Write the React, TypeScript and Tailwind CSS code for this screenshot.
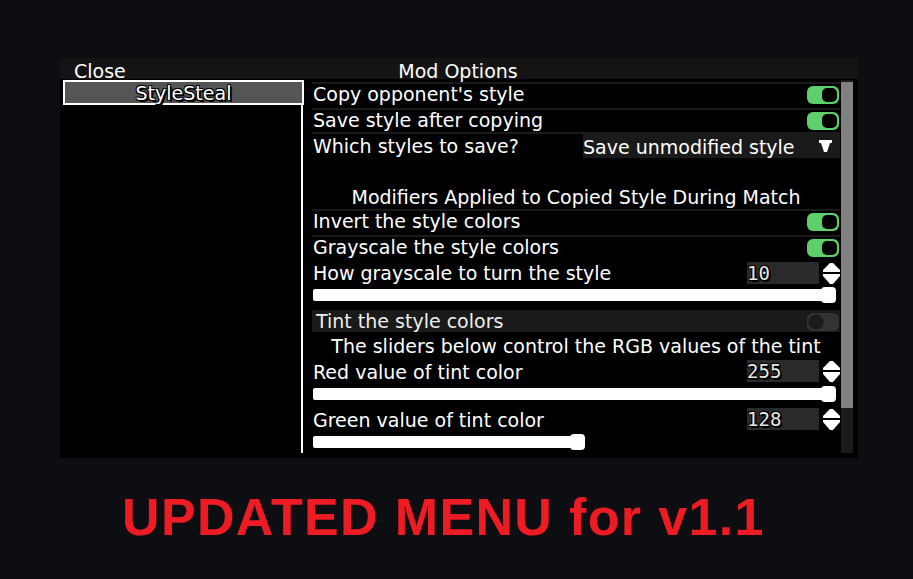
import React from "react";

const shadowAll =
  "[text-shadow:1px_1px_0_#000,-1px_-1px_0_#000,1px_-1px_0_#000,-1px_1px_0_#000,2px_2px_0_#000]";

function Toggle({ on }: { on: boolean }) {
  if (on) {
    return (
      <div className="w-[32px] h-[18px] rounded-[6px] bg-[#5fcf6b] flex justify-end items-center p-[2px] shrink-0">
        <div className="w-[15px] h-[14px] rounded-[5px] bg-black" />
      </div>
    );
  }
  return (
    <div className="w-[32px] h-[18px] rounded-[6px] bg-[#333333] flex items-center p-[1px] shrink-0">
      <div className="w-[16px] h-[16px] rounded-full bg-[#1c1c1c] border border-[#262626]" />
    </div>
  );
}

function Spinner() {
  return (
    <svg width="17" height="21" viewBox="0 0 17 21" className="shrink-0">
      <path d="M7 0 H10 L17 7 V9 H0 V7 Z" fill="#fff" />
      <path d="M0 11 H17 V13 L10 21 H7 L0 13 Z" fill="#fff" />
    </svg>
  );
}

function NumberInput({ value }: { value: string }) {
  return (
    <div className="flex items-start gap-[4px]">
      <div
        className={`w-[72px] h-[22px] bg-[#2a2a2a] text-[#e6e6e6] font-['DejaVu_Sans_Mono',monospace] text-[19px] leading-[22px] ${shadowAll}`}
      >
        {value}
      </div>
      <div className="mt-[1px]">
        <Spinner />
      </div>
    </div>
  );
}

function Slider({ width }: { width: number }) {
  return (
    <div className="ml-[1px] h-[16px] relative w-[523px]">
      <div
        className="absolute left-0 top-[2px] h-[12px] bg-white rounded-l-[2px]"
        style={{ width: width - 7 }}
      />
      <div
        className="absolute top-0 w-[15px] h-[16px] rounded-[4px] bg-white"
        style={{ left: width - 15 }}
      />
    </div>
  );
}

function ToggleRow({ label, on, h }: { label: string; on: boolean; h: number }) {
  return (
    <div
      className="border-t-2 border-[#1a1a1a] flex items-start justify-between"
      style={{ height: h }}
    >
      <div className="pl-[1px]">{label}</div>
      <div className="mt-[2px] mr-[1px]">
        <Toggle on={on} />
      </div>
    </div>
  );
}

export default function App() {
  return (
    <div className="w-[913px] h-[579px] bg-[#0d0e12] flex flex-col items-start pt-[58px] overflow-hidden">
      <div className="ml-[60px] w-[798px] h-[400px] bg-black flex flex-col text-white font-['DejaVu_Sans',sans-serif] text-[19px] leading-[20px]">
        {/* Title bar */}
        <div className="h-[21px] bg-[#141414] grid grid-cols-[1fr_auto_1fr] pt-[3px]">
          <div className="pl-[14px]">Close</div>
          <div className="-ml-[2px]">Mod Options</div>
          <div />
        </div>
        {/* Body */}
        <div className="flex flex-1 min-h-0">
          {/* Sidebar */}
          <div className="w-[243px] flex flex-col pt-[1px] pb-[5px]">
            <div
              className={`ml-[3px] w-[241px] h-[25px] border-2 border-white bg-[#555555] flex items-center justify-center ${shadowAll}`}
            >
              StyleSteal
            </div>
            <div className="flex-1 border-r-2 border-white" />
          </div>
          {/* Content */}
          <div className="flex-1 flex pl-[9px]">
            <div className="w-[528px] flex flex-col pt-[3px]">
              <ToggleRow label="Copy opponent's style" on h={26} />
              <ToggleRow label="Save style after copying" on h={24} />
              <div className="h-[26px] border-t-2 border-[#1a1a1a] flex items-end justify-between">
                <div className="pl-[1px] mb-[2px]">Which styles to save?</div>
                <div className="w-[257px] h-[24px] bg-[#1a1a1a] flex items-center justify-between pr-[8px]">
                  <span className="pt-[1px]">Save unmodified style</span>
                  <svg width="13" height="12" viewBox="0 0 13 12">
                    <path d="M0 0 H13 V3 H11 L8 12 H5 L2 3 H0 Z" fill="#fff" />
                  </svg>
                </div>
              </div>
              <div className="mt-[29px] h-[22px] text-center">
                Modifiers Applied to Copied Style During Match
              </div>
              <ToggleRow label="Invert the style colors" on h={26} />
              <ToggleRow label="Grayscale the style colors" on h={25} />
              <div className="h-[25px] flex items-start justify-between">
                <div className="pl-[1px] mt-[3px]">How grayscale to turn the style</div>
                <div className="mt-[2px]">
                  <NumberInput value="10" />
                </div>
              </div>
              <div className="mt-[2px]">
                <Slider width={523} />
              </div>
              <div className="mt-[7px] h-[22px] bg-[#1a1a1a] flex items-start justify-between">
                <div className="pl-[4px] pt-[1px] text-[#eeeeee]">Tint the style colors</div>
                <div className="mt-[3px] mr-[1px]">
                  <Toggle on={false} />
                </div>
              </div>
              <div className="mt-[4px] h-[22px] text-center">
                The sliders below control the RGB values of the tint
              </div>
              <div className="mt-[2px] h-[22px] flex items-start justify-between">
                <div className="pl-[1px] mt-[2px]">Red value of tint color</div>
                <NumberInput value="255" />
              </div>
              <div className="mt-[4px]">
                <Slider width={523} />
              </div>
              <div className="mt-[6px] h-[22px] flex items-start justify-between">
                <div className="pl-[1px] mt-[2px]">Green value of tint color</div>
                <NumberInput value="128" />
              </div>
              <div className="mt-[4px]">
                <Slider width={272} />
              </div>
            </div>
            {/* Scrollbar */}
            <div className="ml-[1px] w-[12px] mt-[1px] mb-[5px] bg-[#1a1a1a] flex flex-col">
              <div className="mt-[2px] h-[326px] bg-[#808080]" />
            </div>
          </div>
        </div>
      </div>
      <div className="ml-[122px] mt-[33px] font-['Liberation_Sans',Arial,sans-serif] font-bold text-[52px] leading-[52px] tracking-[1.35px] text-[#ed1c24]">
        UPDATED MENU for v1.1
      </div>
    </div>
  );
}
